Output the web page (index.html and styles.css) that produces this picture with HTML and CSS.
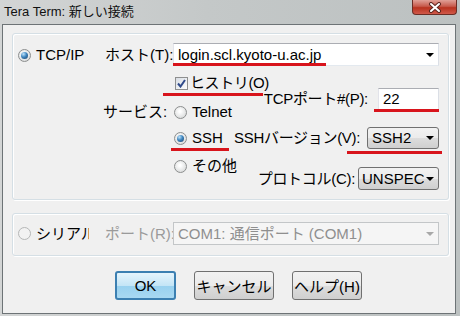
FILE: index.html
```html
<!DOCTYPE html>
<html>
<head>
    <meta charset="UTF-8">
    <link rel="stylesheet" href="styles.css">
</head>
<body>
    <div class="window">
        <div class="titlebar">
            <span class="title">Tera Term: 新しい接続</span>
            <div class="close-btn">
                <svg width="16" height="11" viewBox="0 0 16 11">
                    <path d="M4 2 L12 9 M12 2 L4 9" stroke="#5b2620" stroke-width="4" stroke-linecap="round"/>
                    <path d="M4 2 L12 9 M12 2 L4 9" stroke="#ffffff" stroke-width="2" stroke-linecap="round"/>
                </svg>
            </div>
        </div>

        <div class="client">
            <div class="group group-tcp">
                <label class="opt opt-tcp"><span class="radio checked"></span>TCP/IP</label>
                <span class="lbl">ホスト(T):</span>
                <div class="edit-combo">
                    <span class="value">login.scl.kyoto-u.ac.jp</span>
                    <span class="arrow"></span>
                </div>

                <span class="lbl lbl-service">サービス:</span>
                <div class="service">
                    <label class="opt opt-hist"><span class="checkbox">
                        <svg width="9" height="9" viewBox="0 0 9 9"><path d="M1 4.5 L3.5 7.5 L8 1" fill="none" stroke="#2f4a8a" stroke-width="2"/></svg>
                    </span>ヒストリ(O)</label>

                    <label class="opt opt-telnet"><span class="radio"></span>Telnet</label>
                    <div class="field-row row-port">
                        <span class="lbl">TCPポート#(P):</span>
                        <div class="edit port-field">22</div>
                    </div>

                    <label class="opt opt-ssh"><span class="radio checked"></span>SSH</label>
                    <div class="field-row row-ver">
                        <span class="lbl">SSHバージョン(V):</span>
                        <div class="dropdown dd-ver"><span class="value">SSH2</span><span class="arrow"></span></div>
                    </div>

                    <label class="opt opt-other"><span class="radio"></span>その他</label>
                    <div class="field-row row-proto">
                        <span class="lbl">プロトコル(C):</span>
                        <div class="dropdown dd-proto"><span class="value">UNSPEC</span><span class="arrow"></span></div>
                    </div>
                </div>
            </div>

            <div class="group group-serial">
                <label class="opt opt-serial"><span class="radio disabled"></span><span class="clip">シリアル(E)</span></label>
                <span class="lbl muted">ポート(R):</span>
                <div class="edit-combo disabled">
                    <span class="value">COM1: 通信ポート (COM1)</span>
                    <span class="arrow"></span>
                </div>
            </div>

            <div class="buttons">
                <button class="btn btn-default">OK</button>
                <button class="btn btn-cancel">キャンセル</button>
                <button class="btn btn-help">ヘルプ(H)</button>
            </div>
        </div>

        <span class="mark mark-host"></span>
        <span class="mark mark-hist"></span>
        <span class="mark mark-port"></span>
        <span class="mark mark-ssh"></span>
        <span class="mark mark-ver"></span>
    </div>
</body>
</html>
```

FILE: styles.css
```css
body {
    margin: 0;
    font-family: 'Liberation Sans', 'Noto Sans CJK JP', sans-serif;
    font-size: 15px;
    color: #000;
    background: #fff;
}

.window {
    position: relative;
    width: 460px;
    height: 316px;
    box-sizing: border-box;
    padding: 0 4px 2px 2px;
    background: linear-gradient(to right, #d3d5d5, #c4c8c8 45%, #bcc1c1);
    display: flex;
    flex-direction: column;
}

.titlebar {
    height: 24px;
    display: flex;
    align-items: flex-start;
    justify-content: space-between;
}

.title {
    font-size: 13px;
    line-height: 14px;
    margin: 5px 0 0 2px;
    color: #111;
}

.close-btn {
    width: 45px;
    height: 15px;
    margin-right: -1px;
    box-sizing: border-box;
    border: 1px solid #6b2d25;
    border-top: none;
    border-radius: 0 0 4px 4px;
    background: linear-gradient(#e0a097, #c75a4c 45%, #b8321f 55%, #d0594a);
    display: flex;
    justify-content: center;
    align-items: center;
}

.client {
    flex: 1;
    border: 1px solid #6d7376;
    background: #f0f0f0;
    padding: 8px 6px 0 9px;
}

/* group boxes */
.group {
    border: 1px solid #d5dfe5;
    border-radius: 3px;
    box-shadow: inset 1px 1px 0 #fff, 1px 1px 0 #fff;
    display: grid;
    grid-template-columns: 87px 68px 266px;
    padding: 9px 9px 9px 5px;
}

.group-tcp {
    grid-template-rows: 23px 124px;
}

.group-serial {
    margin-top: 13px;
    padding: 8px 9px 10px 5px;
    grid-template-rows: 23px;
}

.lbl {
    white-space: nowrap;
    align-self: center;
    line-height: 18px;
}

.lbl-service {
    grid-column: 2;
    align-self: start;
    margin: 37px 0 0 -2px;
}

.muted {
    color: #9a9a9a;
}

/* radio / checkbox */
.opt {
    display: flex;
    align-items: center;
    white-space: nowrap;
    line-height: 18px;
    height: 18px;
}

.opt-tcp {
    align-self: center;
    margin-top: 1px;
}

.opt-serial {
    align-self: center;
}

.opt-serial .clip {
    width: 53px;
    overflow: hidden;
}

.radio {
    width: 13px;
    height: 13px;
    box-sizing: border-box;
    border-radius: 50%;
    border: 1px solid #8c8e8e;
    background: radial-gradient(circle at 45% 40%, #ffffff 10%, #d4d6d6 90%);
    margin-right: 5px;
    position: relative;
    flex-shrink: 0;
}

.radio.checked::after {
    content: '';
    position: absolute;
    left: 2px;
    top: 2px;
    width: 7px;
    height: 7px;
    border-radius: 50%;
    background: radial-gradient(circle at 35% 30%, #bfe4fb 0%, #3f86c0 45%, #1c3f62 100%);
}

.radio.disabled {
    border-color: #b5b7b7;
    background: #f2f2f2;
}

.checkbox {
    width: 13px;
    height: 13px;
    box-sizing: border-box;
    border: 1px solid #8e8f8f;
    background: linear-gradient(135deg, #d8dde4, #fdfdfd);
    margin-right: 2px;
    display: flex;
    align-items: center;
    justify-content: center;
    flex-shrink: 0;
}

/* service area */
.service {
    grid-column: 3;
    display: grid;
    grid-template-columns: 61px minmax(0, 1fr);
    grid-template-rows: 25px 30px 31px 38px;
}

.opt-hist {
    grid-row: 1;
    grid-column: 1;
    align-self: end;
    height: 16px;
    margin-left: 2px;
    letter-spacing: -0.4px;
}

.opt-telnet,
.opt-ssh,
.opt-other {
    grid-column: 1;
    margin-left: 1px;
}

.opt-telnet {
    grid-row: 2;
    align-self: end;
}

.opt-ssh {
    grid-row: 3;
    align-self: start;
    margin-top: 8px;
}

.opt-other {
    grid-row: 4;
    align-self: start;
    margin-top: 5px;
}

.field-row {
    grid-column: 2;
    display: flex;
    justify-content: flex-end;
    align-items: center;
    gap: 7px;
}

.field-row .lbl {
    letter-spacing: -0.3px;
}

.row-port {
    grid-row: 2;
    align-self: start;
    margin-top: -3px;
    gap: 10px;
}

.row-ver {
    grid-row: 3;
    align-self: start;
    margin-top: 6px;
}

.row-proto {
    grid-row: 4;
    align-self: end;
    gap: 3px;
}

/* inputs */
.edit-combo,
.edit {
    box-sizing: border-box;
    background: #fff;
    border: 1px solid;
    border-color: #abadb3 #dbdfe6 #e3e9ef #e2e3ea;
    display: flex;
    align-items: center;
    line-height: 18px;
}

.edit-combo {
    height: 23px;
    padding: 0 4px;
    justify-content: space-between;
}

.edit-combo.disabled {
    background: #f5f5f5;
    border-color: #c3c6c8;
    color: #8f8f8f;
}

.port-field {
    width: 61px;
    height: 22px;
    padding: 0 4px;
}

.arrow {
    width: 0;
    height: 0;
    border-left: 4px solid transparent;
    border-right: 4px solid transparent;
    border-top: 4px solid #000;
}

.edit-combo.disabled .arrow {
    border-top-color: #a8a8a8;
}

.dropdown {
    box-sizing: border-box;
    border: 1px solid #707070;
    border-radius: 3px;
    background: linear-gradient(#f2f2f2, #ebebeb 50%, #dddddd 51%, #cfcfcf);
    display: flex;
    align-items: center;
    justify-content: space-between;
    padding: 0 4px;
    overflow: hidden;
    white-space: nowrap;
    line-height: 18px;
}

.dd-ver {
    width: 77px;
    height: 22px;
}

.dd-proto {
    width: 81px;
    height: 23px;
    padding-left: 3px;
}

.dd-proto .value {
    width: 62px;
    overflow: hidden;
}

/* buttons */
.buttons {
    display: flex;
    gap: 18px;
    margin-top: 15px;
    padding-left: 103px;
}

.btn {
    font: inherit;
    height: 29px;
    padding: 0;
    border: 1px solid #707070;
    border-radius: 3px;
    background: linear-gradient(#f2f2f2, #ebebeb 50%, #dddddd 51%, #cfcfcf);
    color: #000;
}

.btn-default {
    width: 61px;
    border: 2px solid #3c7fb1;
    background: linear-gradient(#e5f4fc, #c4e5f6 50%, #98d1ef 51%, #a8d8f2);
}

.btn-cancel {
    width: 80px;
}

.btn-help {
    width: 70px;
}

/* red annotation marks */
.mark {
    position: absolute;
    height: 3px;
    background: #d8141c;
}

.mark-host { left: 173px; top: 63px; width: 153px; }
.mark-hist { left: 163px; top: 93px; width: 100px; }
.mark-port { left: 374px; top: 109px; width: 65px; }
.mark-ssh  { left: 171px; top: 148px; width: 58px; }
.mark-ver  { left: 347px; top: 151px; width: 95px; }
```
